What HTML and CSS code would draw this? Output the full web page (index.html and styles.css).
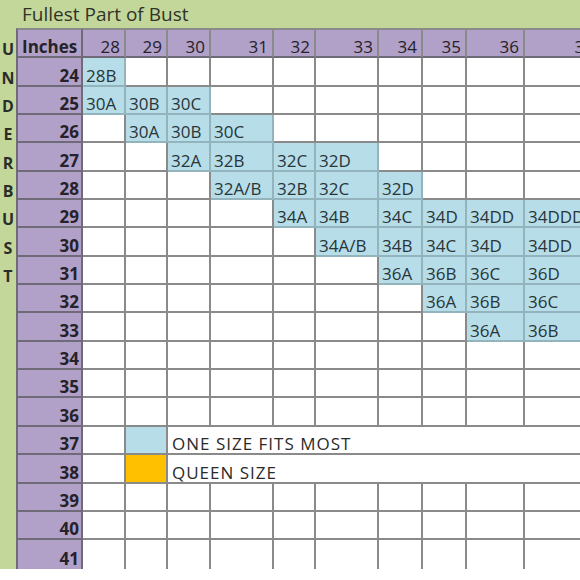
FILE: index.html
```html
<!DOCTYPE html>
<html>
<head>
<meta charset="utf-8">
<link rel="stylesheet" href="styles.css">
</head>
<body>
<div class="sheet">
  <div class="title">Fullest Part of Bust</div>
  <div class="grid">
    <div class="row head"><div class="g">U</div><div class="c in">Inches</div><div class="c h">28</div><div class="c h">29</div><div class="c h">30</div><div class="c h">31</div><div class="c h">32</div><div class="c h">33</div><div class="c h">34</div><div class="c h">35</div><div class="c h">36</div><div class="c h">37</div></div>
    <div class="row"><div class="g">N</div><div class="c in">24</div><div class="c b">28B</div><div class="c"></div><div class="c"></div><div class="c"></div><div class="c"></div><div class="c"></div><div class="c"></div><div class="c"></div><div class="c"></div><div class="c"></div></div>
    <div class="row"><div class="g">D</div><div class="c in">25</div><div class="c b">30A</div><div class="c b">30B</div><div class="c b">30C</div><div class="c"></div><div class="c"></div><div class="c"></div><div class="c"></div><div class="c"></div><div class="c"></div><div class="c"></div></div>
    <div class="row"><div class="g">E</div><div class="c in">26</div><div class="c"></div><div class="c b">30A</div><div class="c b">30B</div><div class="c b">30C</div><div class="c"></div><div class="c"></div><div class="c"></div><div class="c"></div><div class="c"></div><div class="c"></div></div>
    <div class="row"><div class="g">R</div><div class="c in">27</div><div class="c"></div><div class="c"></div><div class="c b">32A</div><div class="c b">32B</div><div class="c b">32C</div><div class="c b">32D</div><div class="c"></div><div class="c"></div><div class="c"></div><div class="c"></div></div>
    <div class="row"><div class="g">B</div><div class="c in">28</div><div class="c"></div><div class="c"></div><div class="c"></div><div class="c b">32A/B</div><div class="c b">32B</div><div class="c b">32C</div><div class="c b">32D</div><div class="c"></div><div class="c"></div><div class="c"></div></div>
    <div class="row"><div class="g">U</div><div class="c in">29</div><div class="c"></div><div class="c"></div><div class="c"></div><div class="c"></div><div class="c b">34A</div><div class="c b">34B</div><div class="c b">34C</div><div class="c b">34D</div><div class="c b">34DD</div><div class="c b">34DDD</div></div>
    <div class="row"><div class="g">S</div><div class="c in">30</div><div class="c"></div><div class="c"></div><div class="c"></div><div class="c"></div><div class="c"></div><div class="c b">34A/B</div><div class="c b">34B</div><div class="c b">34C</div><div class="c b">34D</div><div class="c b">34DD</div></div>
    <div class="row"><div class="g">T</div><div class="c in">31</div><div class="c"></div><div class="c"></div><div class="c"></div><div class="c"></div><div class="c"></div><div class="c"></div><div class="c b">36A</div><div class="c b">36B</div><div class="c b">36C</div><div class="c b">36D</div></div>
    <div class="row"><div class="g"></div><div class="c in">32</div><div class="c"></div><div class="c"></div><div class="c"></div><div class="c"></div><div class="c"></div><div class="c"></div><div class="c"></div><div class="c b">36A</div><div class="c b">36B</div><div class="c b">36C</div></div>
    <div class="row"><div class="g"></div><div class="c in">33</div><div class="c"></div><div class="c"></div><div class="c"></div><div class="c"></div><div class="c"></div><div class="c"></div><div class="c"></div><div class="c"></div><div class="c b">36A</div><div class="c b">36B</div></div>
    <div class="row"><div class="g"></div><div class="c in">34</div><div class="c"></div><div class="c"></div><div class="c"></div><div class="c"></div><div class="c"></div><div class="c"></div><div class="c"></div><div class="c"></div><div class="c"></div><div class="c"></div></div>
    <div class="row"><div class="g"></div><div class="c in">35</div><div class="c"></div><div class="c"></div><div class="c"></div><div class="c"></div><div class="c"></div><div class="c"></div><div class="c"></div><div class="c"></div><div class="c"></div><div class="c"></div></div>
    <div class="row"><div class="g"></div><div class="c in">36</div><div class="c"></div><div class="c"></div><div class="c"></div><div class="c"></div><div class="c"></div><div class="c"></div><div class="c"></div><div class="c"></div><div class="c"></div><div class="c"></div></div>
    <div class="row"><div class="g"></div><div class="c in">37</div><div class="c"></div><div class="c sw-blue"></div><div class="c legend">ONE SIZE FITS MOST</div></div>
    <div class="row"><div class="g"></div><div class="c in">38</div><div class="c"></div><div class="c sw-gold"></div><div class="c legend">QUEEN SIZE</div></div>
    <div class="row"><div class="g"></div><div class="c in">39</div><div class="c"></div><div class="c"></div><div class="c"></div><div class="c"></div><div class="c"></div><div class="c"></div><div class="c"></div><div class="c"></div><div class="c"></div><div class="c"></div></div>
    <div class="row"><div class="g"></div><div class="c in">40</div><div class="c"></div><div class="c"></div><div class="c"></div><div class="c"></div><div class="c"></div><div class="c"></div><div class="c"></div><div class="c"></div><div class="c"></div><div class="c"></div></div>
    <div class="row"><div class="g"></div><div class="c in">41</div><div class="c"></div><div class="c"></div><div class="c"></div><div class="c"></div><div class="c"></div><div class="c"></div><div class="c"></div><div class="c"></div><div class="c"></div><div class="c"></div></div>
  </div>
</div>
</body>
</html>
```
FILE: styles.css
```css
html, body {
  margin: 0;
  padding: 0;
  background: #ffffff;
}
body {
  width: 580px;
  height: 580px;
  overflow: hidden;
  font-family: "Open Sans", "Liberation Sans", sans-serif;
  color: #333;
}
.sheet {
  width: 600px;
  background: #c4d79b;
}
.title {
  height: 28px;
  box-sizing: border-box;
  padding: 0 0 4px 22px;
  display: flex;
  align-items: flex-end;
  font-size: 19px;
  line-height: 1;
  color: #30332a;
}
.grid {
  display: grid;
  grid-template-columns: 16px 67px 43px 42px 43px 63px 42px 63px 44px 44px 58px 75px;
  grid-template-rows: 30.35px repeat(18, 28.35px);
}
.row {
  display: contents;
}
.g, .c {
  box-sizing: border-box;
  display: flex;
  align-items: flex-end;
  font-size: 17px;
  line-height: 1;
  padding-bottom: 1px;
  white-space: nowrap;
}
.g {
  justify-content: center;
  font-weight: bold;
  font-size: 16px;
  color: #2b2d28;
  padding-left: 0;
}
.c {
  background: #ffffff;
  border-right: 2px solid #8a8a8a;
  border-bottom: 2px solid #8a8a8a;
  padding-left: 3px;
  color: #2c3336;
}
.row:last-child .c {
  border-bottom: 0;
  padding-bottom: 2px;
}
.head .c {
  border-top: 2px solid #8a8a8a;
}
.in {
  background: #b1a0c7;
  border-left: 2px solid #6f6a78;
  border-right-color: #6f6a78;
  border-bottom-color: #6f6a78;
  justify-content: flex-end;
  padding-right: 2px;
  font-weight: bold;
  color: #25222a;
}
.head .in {
  justify-content: flex-start;
  padding-left: 4px;
}
.h {
  background: #b1a0c7;
  justify-content: flex-end;
  padding-right: 4px;
  color: #25222a;
  border-bottom-color: #6f6a78;
}
.b {
  background: #b7dde8;
  border-right-color: #93b3bd;
  border-bottom-color: #93b3bd;
  color: #283539;
}
.sw-blue {
  background: #b7dde8;
}
.sw-gold {
  background: #ffc000;
}
.legend {
  grid-column: span 8;
  padding-left: 4px;
  letter-spacing: 1px;
  color: #2a2a2a;
}
```
